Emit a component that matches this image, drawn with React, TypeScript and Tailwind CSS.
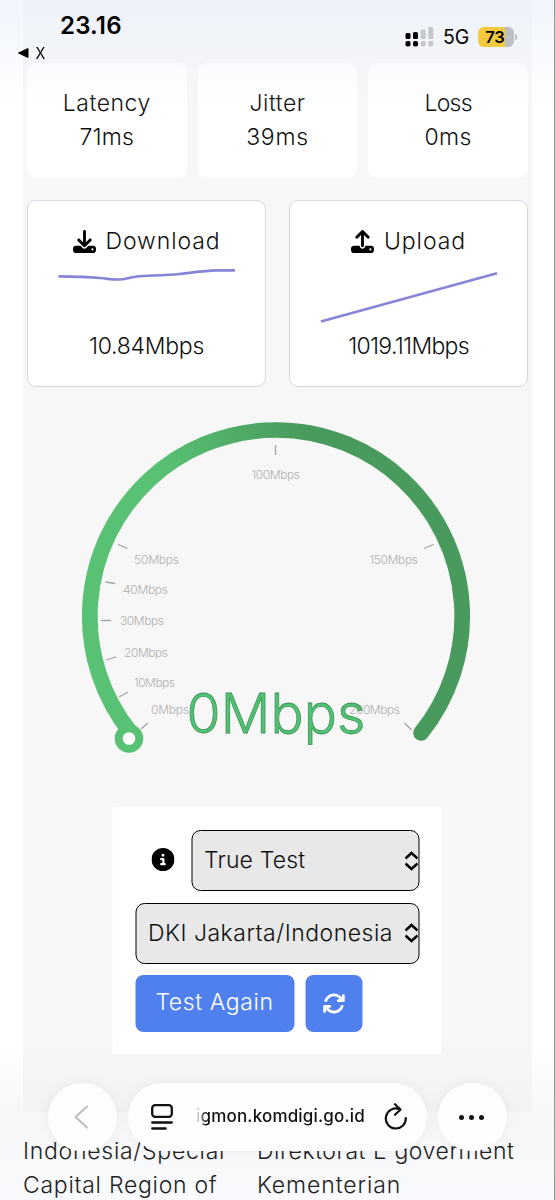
import { FaArrowsRotate, FaCircleInfo, FaDownload, FaUpload } from 'react-icons/fa6';

const stats = [
  { label: 'Latency', value: '71ms', labelClass: 'tracking-[0.55px]', valueClass: 'tracking-[0.2px]' },
  { label: 'Jitter', value: '39ms', labelClass: 'tracking-[0.5px]', valueClass: 'tracking-[0.7px]' },
  { label: 'Loss', value: '0ms', labelClass: 'tracking-[-0.7px]', valueClass: 'tracking-[0.4px]' },
];

// tick line + label of the gauge scale
const ticks = [
  { label: '0Mbps', line: [141, 729, 148, 723], x: 151, y: 714, w: 38 },
  { label: '10Mbps', line: [119, 697, 128, 692], x: 134, y: 687, w: 41 },
  { label: '20Mbps', line: [106, 660, 116, 657], x: 124, y: 657, w: 44 },
  { label: '30Mbps', line: [101, 620.5, 111, 620.5], x: 120, y: 625, w: 44 },
  { label: '40Mbps', line: [105.5, 582, 115, 583.5], x: 123, y: 593.5, w: 45 },
  { label: '50Mbps', line: [118, 544.5, 127.5, 548.5], x: 134, y: 564, w: 45 },
  { label: '100Mbps', line: [275.5, 445, 275.5, 455], x: 251.5, y: 479, w: 48.5 },
  { label: '150Mbps', line: [424, 548.5, 433.5, 544.5], x: 369.5, y: 564, w: 48.5 },
  { label: '200Mbps', line: [404.5, 723, 411.5, 730], x: 349, y: 714, w: 51 },
];

function StatusBar() {
  return (
    <div className="relative z-10 flex h-[63px] justify-between pl-[18px] pr-[38px] text-black">
      <div className="pt-[10px]">
        <div className="pl-[42px] text-[24px] font-semibold leading-8 tracking-[0.2px]">23.16</div>
        <div className="flex items-center gap-[6px] text-[16px] leading-[22px]">
          <svg width="11" height="10" viewBox="0 0 11 10">
            <path d="M10 .5v9L.5 5z" fill="#000" stroke="#000" strokeLinejoin="round" />
          </svg>
          <span className="scale-x-90">X</span>
        </div>
      </div>
      <div className="mt-[27px] flex h-[20px] items-center">
        <svg width="29" height="20" viewBox="0 0 29 20">
          <g fill="#000">
            <rect x="0.5" y="6" width="5" height="6" rx="1.6" />
            <rect x="8" y="5" width="5" height="7" rx="1.6" />
            <rect x="0.5" y="14" width="5" height="5.5" rx="1.8" />
            <rect x="8" y="14" width="5" height="5.5" rx="1.8" />
          </g>
          <g fill="#c4c6ca">
            <rect x="15.7" y="2.5" width="5" height="9.5" rx="1.6" />
            <rect x="23.3" y="0" width="5" height="12" rx="1.6" />
            <rect x="15.7" y="14" width="5" height="5.5" rx="1.8" />
            <rect x="23.3" y="14" width="5" height="5.5" rx="1.8" />
          </g>
        </svg>
        <span className="ml-[9px] mt-[2px] w-[35px] whitespace-nowrap text-[19.5px]">5G</span>
        <div className="flex h-[20px] w-[36px] items-center justify-center rounded-[6px] bg-[linear-gradient(90deg,#f2c93f_76%,#bfc0c3_76%)] pr-[2px] text-[16.5px] font-semibold">
          73
        </div>
        <div className="ml-[1px] h-[6px] w-[2px] rounded-r bg-[#bfc0c3]" />
      </div>
    </div>
  );
}

function Gauge() {
  return (
    <svg className="block" width="509" height="420" viewBox="23 387 509 420">
      <defs>
        <linearGradient id="arc" gradientUnits="userSpaceOnUse" x1="170" y1="500" x2="310" y2="450">
          <stop offset="0" stopColor="#59c173" />
          <stop offset="1" stopColor="#489b5d" />
        </linearGradient>
      </defs>
      <path
        d="M131 733A186.200 186.200 0 1 1 421 733"
        fill="none"
        stroke="url(#arc)"
        strokeWidth="15.7"
        strokeLinecap="round"
      />
      <circle cx="129" cy="738.5" r="10.3" fill="#fff" stroke="#59c173" strokeWidth="8" />
      {ticks.map((t) => (
        <g key={t.label}>
          <line x1={t.line[0]} y1={t.line[1]} x2={t.line[2]} y2={t.line[3]} stroke="#a3a3a3" strokeWidth="1.3" />
          <text x={t.x} y={t.y} textLength={t.w} className="fill-[#b0b0b0] text-[12px] font-light">
            {t.label}
          </text>
        </g>
      ))}
      <text
        x="186.5"
        y="732.5"
        textLength="179"
        className="fill-[#4fc273] stroke-[#3f9157] text-[55px] font-light"
        strokeWidth="0.8"
      >
        0Mbps
      </text>
    </svg>
  );
}

function UpDown() {
  return (
    <svg width="14" height="20" viewBox="0 0 14 20" fill="none" stroke="#000" strokeWidth="2.4">
      <path d="M1 7.500 7 2l6 5.500M1 12.500 7 18l6-5.500" />
    </svg>
  );
}

function BrowserBar() {
  return (
    <div className="absolute left-[48px] top-[1083px] z-20 flex gap-[11px] text-[#111]">
      <div className="flex h-[68px] w-[69px] items-center justify-center rounded-full bg-[#fdfdfe] shadow-[0_0_14px_rgba(0,0,0,0.05)]">
        <svg className="mr-[3px]" width="14" height="24" viewBox="0 0 14 24" fill="none" stroke="#bcbcbf" strokeWidth="2" strokeLinecap="round" strokeLinejoin="round">
          <path d="M13 1.500 1.500 12 13 22.500" />
        </svg>
      </div>
      <div className="flex h-[68px] w-[299px] items-center rounded-full bg-[#fdfdfe] pl-[23px] shadow-[0_0_14px_rgba(0,0,0,0.05)]">
        <svg width="22" height="26" viewBox="0 0 22 26" fill="none" stroke="currentColor" strokeWidth="2.3" strokeLinecap="round">
          <rect x="1.2" y="1.2" width="19.6" height="11.6" rx="3" />
          <path d="M1.200 18.500h19.600M1.200 24.500h13.500" />
        </svg>
        <span className="ml-[23px] w-[170px] whitespace-nowrap bg-[linear-gradient(90deg,transparent,#111_10px)] bg-clip-text text-[17px] font-medium tracking-[0.18px] text-transparent">
          igmon.komdigi.go.id
        </span>
        <svg className="ml-[18px]" width="24" height="28" viewBox="0 0 24 28" fill="none" stroke="currentColor" strokeWidth="2.2" strokeLinecap="round" strokeLinejoin="round">
          <path d="M15.500 6.200A10 10 0 1 0 21.800 15M11 1.200l5.500 5.300-5.500 5.300" />
        </svg>
      </div>
      <div className="flex h-[68px] w-[69px] items-center justify-center gap-[5px] rounded-full bg-[#fdfdfe] pr-[2px] shadow-[0_0_14px_rgba(0,0,0,0.05)]">
        <i className="h-[5px] w-[5px] rounded-full bg-[#111]" />
        <i className="h-[5px] w-[5px] rounded-full bg-[#111]" />
        <i className="h-[5px] w-[5px] rounded-full bg-[#111]" />
      </div>
    </div>
  );
}

export default function App() {
  return (
    <div className="relative h-[1200px] w-[555px] overflow-hidden border-r border-[#999] bg-white font-['Inter',sans-serif] text-[#111]">
      <div className="mx-[23px] h-[1112px] w-[509px] bg-[#f7f7f7]">
        <div className="-mx-[23px]">
          <StatusBar />
        </div>

        {/* Ping results */}
        <div className="grid grid-cols-3 gap-[11px] px-[4px]">
          {stats.map((s) => (
            <div
              key={s.label}
              className="flex h-[115px] flex-col items-center justify-center rounded-[9px] bg-white pb-[2px] text-[23px] font-light leading-[34px]"
            >
              <span className={s.labelClass}>{s.label}</span>
              <span className={s.valueClass}>{s.value}</span>
            </div>
          ))}
        </div>

        {/* Throughput cards */}
        <div className="mt-[22px] grid grid-cols-2 gap-[23px] px-[4px] text-[23px] font-light">
          <div className="flex h-[187px] flex-col items-center rounded-[9px] border-[1.5px] border-[#d6d6e2] bg-white pt-[23px]">
            <div className="flex h-[34px] items-center gap-[10px]">
              <FaDownload className="text-black" />
              <span className="tracking-[0.9px]">Download</span>
            </div>
            <svg className="mt-[6px]" width="178" height="60" viewBox="58 264 178 60" fill="none" stroke="#8884d8" strokeWidth="2.7">
              <path d="M58.500 276.300C80 276.300 90 277 100 278S112 279.700 119 279.500 128 277.500 137 276.500 165 275.500 179 274 205 270.500 216 270.300H235" />
            </svg>
            <span className="mt-[5px] leading-[34px] tracking-[-0.25px]">10.84Mbps</span>
          </div>
          <div className="flex h-[187px] flex-col items-center rounded-[9px] border-[1.5px] border-[#d6d6e2] bg-white pt-[23px]">
            <div className="flex h-[34px] items-center gap-[10px]">
              <FaUpload className="text-black" />
              <span className="tracking-[0.9px]">Upload</span>
            </div>
            <svg className="mt-[6px]" width="178" height="60" viewBox="319 264 178 60" fill="none" stroke="#8884d8" strokeWidth="2.7">
              <path d="M320 321.500 496 273.300" />
            </svg>
            <span className="mt-[5px] leading-[34px] tracking-[-0.7px]">1019.11Mbps</span>
          </div>
        </div>

        <Gauge />

        {/* Test controls */}
        <div className="mx-auto flex h-[247px] w-[329px] -translate-x-[0.5px] flex-col gap-[11.5px] bg-white px-[22.5px] pt-[23px] text-[23px] font-light">
          <div className="flex items-center justify-end gap-[17px]">
            <FaCircleInfo className="mb-[3px] text-black" />
            <button className="flex h-[61px] w-[228px] items-center justify-between rounded-[9px] border-[1.3px] border-black bg-[#e8e8e8] pl-[12px]">
              <span className="tracking-[0.15px]">True Test</span>
              <UpDown />
            </button>
          </div>
          <button className="flex h-[61px] w-full items-center justify-between rounded-[9px] border-[1.3px] border-black bg-[#e8e8e8] pl-[12px]">
            <span className="whitespace-nowrap tracking-[0.5px]">DKI Jakarta/Indonesia</span>
            <UpDown />
          </button>
          <div className="flex gap-[11.5px] text-white">
            <button className="h-[57px] w-[159px] rounded-[8px] bg-[#4f80ee] pb-[2px] tracking-[0.6px]">Test Again</button>
            <button className="flex h-[57px] w-[57px] items-center justify-center rounded-[8px] bg-[#4f80ee]">
              <FaArrowsRotate />
            </button>
          </div>
        </div>
      </div>

      {/* Browser chrome tint */}
      <div className="pointer-events-none absolute inset-x-0 top-0 h-[110px] bg-linear-to-b from-[#e9f0fb]/65 to-transparent" />
      <div className="pointer-events-none absolute inset-x-0 bottom-0 h-[160px] bg-linear-to-b from-transparent via-[#eaeaed]/40 to-[#f8f9fd]/80" />

      {/* Server details */}
      <div className="relative ml-[23px] flex pt-[22px] text-[23px] font-light leading-[34px] text-[#222]">
        <div className="w-[234px] whitespace-nowrap tracking-[0.73px]">
          <p>Indonesia/Special</p>
          <p>Capital Region of</p>
        </div>
        <div className="whitespace-nowrap">
          <p className="tracking-[0.57px]">Direktorat E goverment</p>
          <p className="tracking-[0.9px]">Kementerian</p>
        </div>
      </div>

      <BrowserBar />
    </div>
  );
}
